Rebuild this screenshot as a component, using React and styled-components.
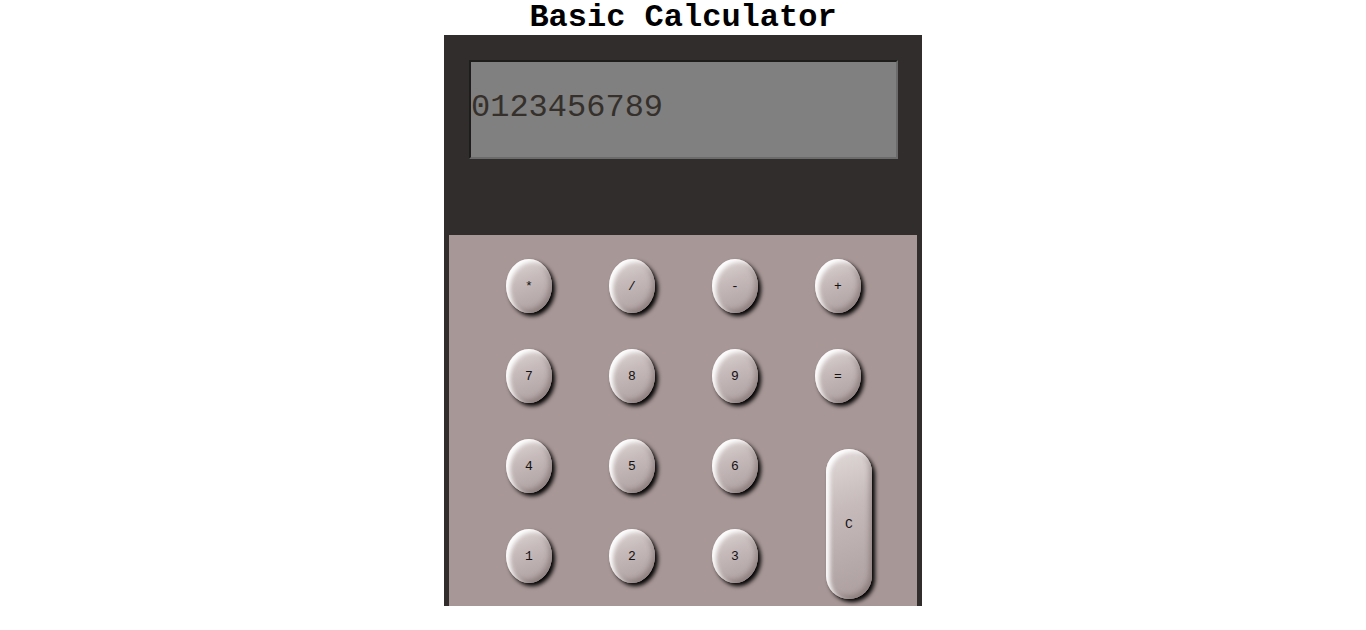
import styled, { createGlobalStyle } from "styled-components";

const GlobalStyle = createGlobalStyle`
  body {
    margin: 0;
    background: #ffffff;
    font-family: "Liberation Mono", "Courier New", monospace;
  }
`;

const Page = styled.div`
  display: flex;
  flex-direction: column;
  align-items: center;
`;

const Title = styled.h1`
  margin: 0;
  font-size: 32px;
  line-height: 35px;
  font-weight: bold;
  color: #000;
`;

const Body = styled.div`
  width: 478px;
  height: 571px;
  background: #312d2d;
  display: flex;
  flex-direction: column;
  align-items: flex-start;
`;

const Screen = styled.div`
  box-sizing: border-box;
  width: 429px;
  height: 99px;
  margin: 25px 0 0 25px;
  background: #808080;
  border: 2px solid;
  border-color: #1f1c1c #6b6b6b #6b6b6b #1f1c1c;
  display: flex;
  align-items: center;
  padding-bottom: 4px;
  font-size: 32px;
  color: #35302b;
`;

const Keypad = styled.div`
  box-sizing: border-box;
  width: 468px;
  height: 371px;
  margin: 76px 0 0 5px;
  background: #a89797;
  display: grid;
  grid-template-columns: repeat(4, 46px);
  grid-auto-rows: 54px;
  column-gap: 57px;
  row-gap: 36px;
  padding: 24px 0 0 57px;
`;

const Key = styled.button`
  width: 46px;
  height: ${(p) => (p.$tall ? "150px" : "54px")};
  border: none;
  padding: 0;
  border-radius: ${(p) => (p.$tall ? "23px" : "50%")};
  background: linear-gradient(
    160deg,
    #e2dada 0%,
    #c6baba 40%,
    #ab9d9d 100%
  );
  box-shadow: inset 4px 3px 4px rgba(255, 255, 255, 0.95),
    inset -3px -3px 5px rgba(70, 50, 50, 0.3), 3px 3px 4px #000;
  font-family: "Liberation Mono", "Courier New", monospace;
  font-size: 13px;
  color: #141212;
  cursor: pointer;
  grid-row: ${(p) => (p.$tall ? "3 / span 2" : "auto")};
  grid-column: ${(p) => (p.$tall ? "4" : "auto")};
  margin: ${(p) => (p.$tall ? "10px 0 0 11px" : "0")};
`;

const keys = ["*", "/", "-", "+", "7", "8", "9", "=", "4", "5", "6", "1", "2", "3"];

export default function App() {
  return (
    <Page>
      <GlobalStyle />
      <Title>Basic Calculator</Title>
      <Body>
        <Screen>0123456789</Screen>
        <Keypad>
          {keys.map((k) => (
            <Key key={k}>{k}</Key>
          ))}
          <Key $tall>C</Key>
        </Keypad>
      </Body>
    </Page>
  );
}
